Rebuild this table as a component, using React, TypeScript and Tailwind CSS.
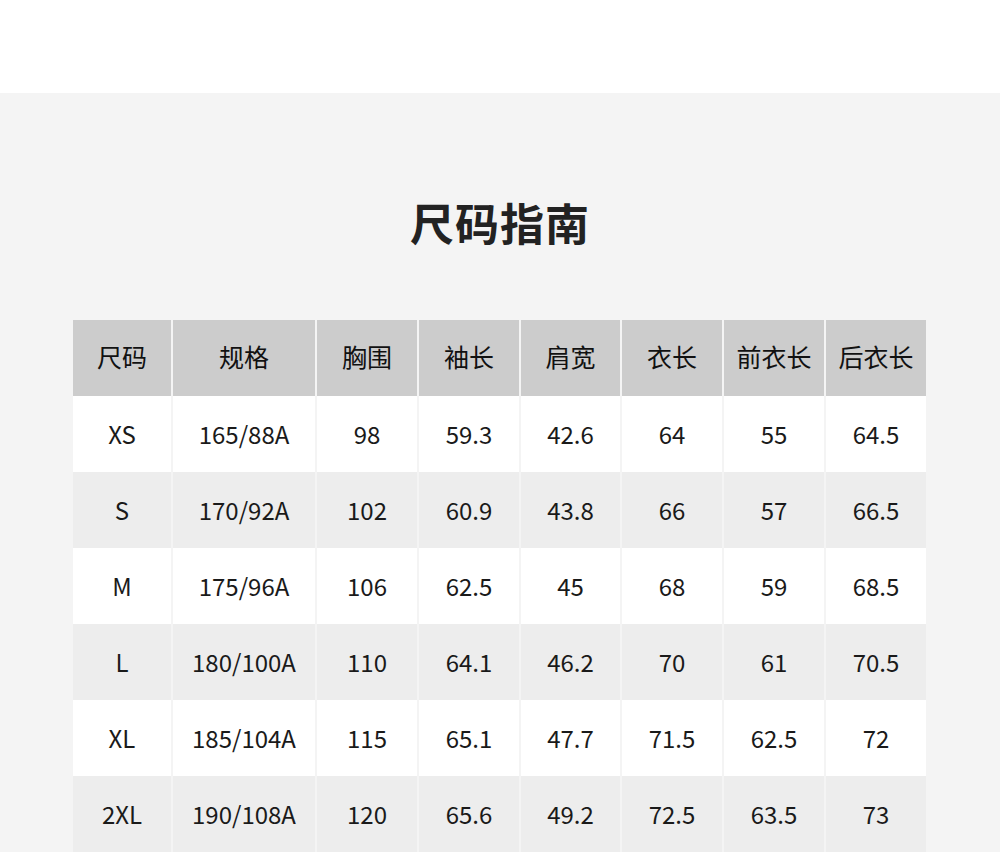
import React from 'react'

const headers = ['尺码', '规格', '胸围', '袖长', '肩宽', '衣长', '前衣长', '后衣长']

const rows = [
  ['XS', '165/88A', '98', '59.3', '42.6', '64', '55', '64.5'],
  ['S', '170/92A', '102', '60.9', '43.8', '66', '57', '66.5'],
  ['M', '175/96A', '106', '62.5', '45', '68', '59', '68.5'],
  ['L', '180/100A', '110', '64.1', '46.2', '70', '61', '70.5'],
  ['XL', '185/104A', '115', '65.1', '47.7', '71.5', '62.5', '72'],
  ['2XL', '190/108A', '120', '65.6', '49.2', '72.5', '63.5', '73'],
]

const App = () => {
  return (
    <div className="min-h-screen bg-white font-['Noto_Sans_CJK_SC',sans-serif]">
      {/* white top strip */}
      <div className="h-[93px] bg-white" />

      {/* size guide */}
      <section className="bg-[#f4f4f4] pt-[107px] pb-0">
        <h1 className="text-center text-[44px] leading-[44px] font-bold text-[#222] tracking-[1px]">
          尺码指南
        </h1>

        <div className="mx-[73px] mt-[76px] grid grid-cols-[98px_142px_100px_100px_99px_100px_100px_100px] gap-x-[2px]">
          {headers.map((h) => (
            <div
              key={h}
              className="h-[76px] pb-[2px] bg-[#cccccc] flex items-center justify-center text-[25px] text-[#111]"
            >
              {h}
            </div>
          ))}
          {rows.map((r, i) =>
            r.map((c, j) => (
              <div
                key={i + '-' + j}
                className={
                  'h-[76px] flex items-center justify-center text-[24px] text-[#1a1a1a] ' +
                  (i % 2 === 0 ? 'bg-white' : 'bg-[#ededed]')
                }
              >
                {c}
              </div>
            ))
          )}
        </div>
      </section>
    </div>
  )
}

export default App
